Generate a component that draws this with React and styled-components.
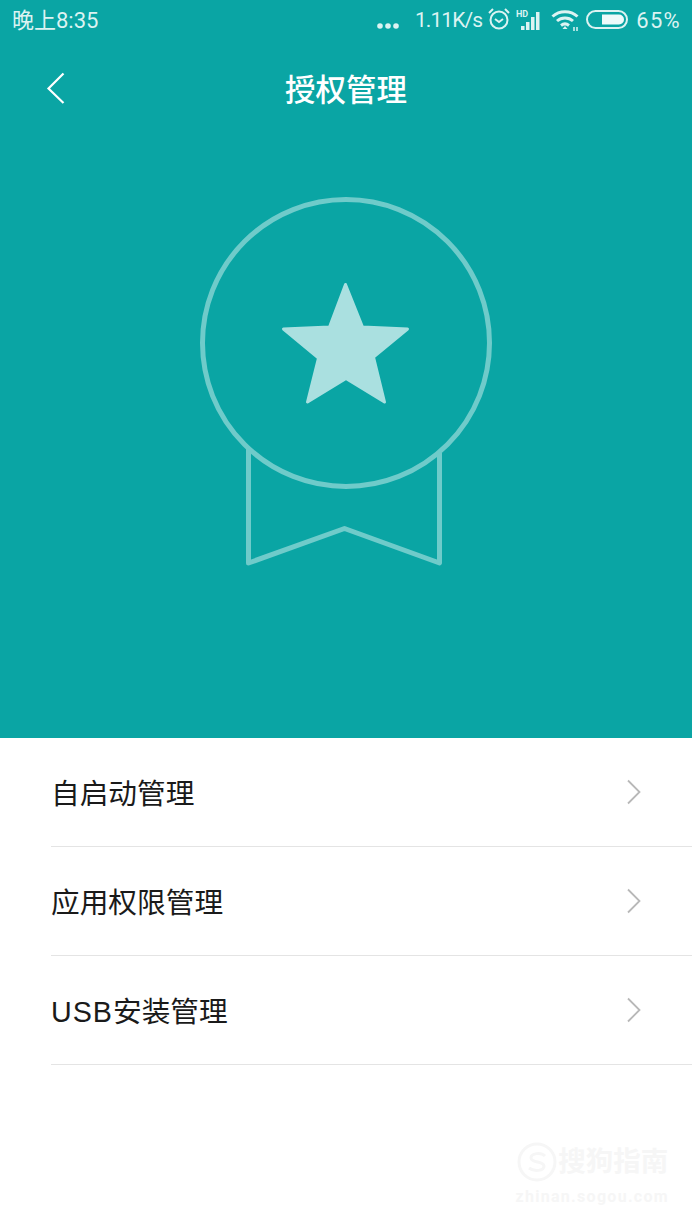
import React from 'react';
import styled, { createGlobalStyle } from 'styled-components';

const GlobalStyle = createGlobalStyle`
  html, body {
    margin: 0;
    padding: 0;
    background: #fff;
    font-family: "Roboto", "Noto Sans CJK SC", sans-serif;
  }
`;

const Page = styled.div`
  width: 692px;
  height: 1230px;
  overflow: hidden;
  background: #fff;
  display: flex;
  flex-direction: column;
`;

const Hero = styled.header`
  height: 738px;
  background: #0aa5a4;
  display: flex;
  flex-direction: column;
  align-items: center;
`;

const StatusBar = styled.div`
  width: 100%;
  box-sizing: border-box;
  height: 40px;
  padding: 0 11px 4px 12px;
  display: flex;
  align-items: center;
  justify-content: space-between;
  color: #dcf3f2;
  font-size: 22px;
`;

const StatusRight = styled.div`
  display: flex;
  align-items: center;
  margin-top: 2px;
`;

const StatusIcon = styled.svg`
  display: block;
  margin-left: ${(p) => p.$gap || 0}px;
  margin-top: ${(p) => p.$drop || 0}px;
`;

const Speed = styled.span`
  margin: 2px 5px 0 16px;
  font-size: 21px;
  letter-spacing: -0.9px;
`;

const Percent = styled.span`
  margin: 2px 0 0 8px;
  letter-spacing: 1.3px;
`;

const NavBar = styled.nav`
  width: 100%;
  height: 96px;
  display: grid;
  grid-template-columns: 1fr auto 1fr;
  align-items: center;
`;

const BackButton = styled.svg`
  display: block;
  margin-left: 46px;
`;

const Title = styled.h1`
  margin: 0;
  color: #fff;
  font-size: 30.5px;
  font-weight: 500;
`;

const Badge = styled.svg`
  margin-top: 61px;
  display: block;
`;

const Menu = styled.ul`
  list-style: none;
  margin: 0;
  padding: 0 0 0 51px;
`;

const MenuItem = styled.li`
  height: 108px;
  border-bottom: 1px solid #e4e4e4;
  display: flex;
  align-items: center;
  justify-content: space-between;
  padding-right: 50px;
  font-family: "Liberation Sans", "Noto Sans CJK SC", sans-serif;
  font-size: 28.7px;
  color: #1a1a1a;
`;

const MenuLabel = styled.span`
  margin-top: -2px;
`;

const Latin = styled.span`
  letter-spacing: 1px;
`;

const Watermark = styled.div`
  margin: 76px 23px 0 auto;
  display: flex;
  flex-direction: column;
  align-items: center;
  color: #f6f6f6;
`;

const WatermarkTop = styled.div`
  display: flex;
  align-items: center;
  font-size: 27.5px;
  font-weight: 700;
  line-height: 42px;
`;

const WatermarkUrl = styled.div`
  margin-top: 4px;
  font-size: 16px;
  font-weight: 700;
  letter-spacing: 1.3px;
  line-height: 20px;
`;

const Chevron = () => (
  <svg width="16" height="26" viewBox="0 0 16 26" fill="none">
    <path d="M2 1.5 L13.5 13 L2 24.5" stroke="#b8b8b8" strokeWidth="1.8" />
  </svg>
);

const items = [
  { latin: '', text: '自启动管理' },
  { latin: '', text: '应用权限管理' },
  { latin: 'USB', text: '安装管理' },
];

const App = () => (
  <Page>
    <GlobalStyle />
    <Hero>
      <StatusBar>
        <span>晚上8:35</span>
        <StatusRight>
          <StatusIcon $drop={14} width="22" height="6" viewBox="0 0 22 6" fill="#dcf3f2">
            <circle cx="3" cy="3" r="2.800" />
            <circle cx="11" cy="3" r="2.800" />
            <circle cx="19" cy="3" r="2.800" />
          </StatusIcon>
          <Speed>1.11K/s</Speed>
          <StatusIcon width="24" height="24" viewBox="0 0 24 24" fill="none" stroke="#dcf3f2" strokeWidth="2">
            <circle cx="12" cy="13" r="8.500" />
            <path d="M8 12l4 3 4-3" />
            <path d="M2 6l4-4M22 6l-4-4" />
          </StatusIcon>
          <StatusIcon $gap={5} width="26" height="24" viewBox="0 0 26 24" fill="#dcf3f2">
            <rect x="5" y="19" width="3.500" height="4" />
            <rect x="10" y="15" width="3.500" height="8" />
            <rect x="15" y="10" width="3.500" height="13" />
            <rect x="20" y="5" width="3.500" height="18" />
            <text x="0" y="10" fontSize="9" fontWeight="700" fontFamily="Roboto, sans-serif">HD</text>
          </StatusIcon>
          <StatusIcon $gap={9} width="28" height="24" viewBox="0 0 28 24" fill="none" stroke="#dcf3f2" strokeWidth="3">
            <path d="M1.500 9.500c7-6.500 18-6.500 25 0" />
            <path d="M6 14c4.500-4 11.500-4 16 0" />
            <path d="M10 18.500c2.500-2 5.500-2 8 0" />
            <path d="M11.500 22h5l-2.500-3z" fill="#dcf3f2" stroke="none" />
            <path d="M23 20v4M26 20v4" strokeWidth="1.500" />
          </StatusIcon>
          <StatusIcon $gap={7} width="42" height="19" viewBox="0 0 42 19" fill="none">
            <rect x="1" y="1" width="40" height="17" rx="8.500" stroke="#dcf3f2" strokeWidth="2" />
            <path d="M16 4.500h17a5 5 0 0 1 5 5a5 5 0 0 1-5 5h-17z" fill="#eefafa" />
          </StatusIcon>
          <Percent>65%</Percent>
        </StatusRight>
      </StatusBar>
      <NavBar>
        <BackButton width="20" height="34" viewBox="0 0 20 34" fill="none">
          <path d="M17.500 2.500 L2.500 17.500 L17.500 32" stroke="#fff" strokeWidth="2.200" />
        </BackButton>
        <Title>授权管理</Title>
      </NavBar>
      <Badge width="292" height="372" viewBox="0 0 292 372">
        <circle cx="146" cy="146" r="143.500" fill="none" stroke="#6fcbca" strokeWidth="5" />
        <path d="M48.500 252 V366 L144.500 331.500 L239.500 366 V256" fill="none" stroke="#6fcbca" strokeWidth="5" strokeLinejoin="round" />
        <path d="M145.500 87.500 L162.500 130 L207.500 132 L173.500 160 L184.500 205 L146 181.500 L107.500 205 L118.500 161 L83.500 132 L129.500 130 Z" fill="#aae0e0" stroke="#aae0e0" strokeWidth="3" strokeLinejoin="round" />
      </Badge>
    </Hero>
    <Menu>
      {items.map((item) => (
        <MenuItem key={item.text}>
          <MenuLabel>
            {item.latin && <Latin>{item.latin}</Latin>}
            {item.text}
          </MenuLabel>
          <Chevron />
        </MenuItem>
      ))}
    </Menu>
    <Watermark>
      <WatermarkTop>
        <svg width="42" height="42" viewBox="0 0 42 42" fill="none" stroke="#f6f6f6" strokeWidth="3">
          <circle cx="21" cy="21" r="18" />
          <path d="M29 15c-4-4-14-3-14 2s13 3 13 8-10 6-15 2" />
        </svg>
        <span>搜狗指南</span>
      </WatermarkTop>
      <WatermarkUrl>zhinan.sogou.com</WatermarkUrl>
    </Watermark>
  </Page>
);

export default App;
